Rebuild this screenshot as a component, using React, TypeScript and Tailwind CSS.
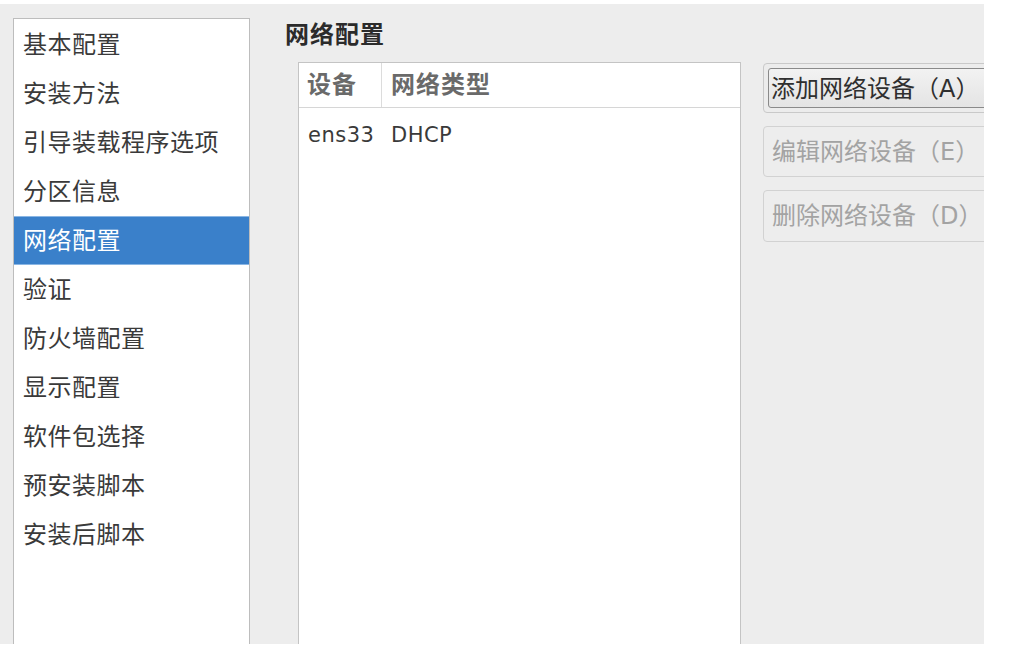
const items = [
  '基本配置',
  '安装方法',
  '引导装载程序选项',
  '分区信息',
  '网络配置',
  '验证',
  '防火墙配置',
  '显示配置',
  '软件包选择',
  '预安装脚本',
  '安装后脚本',
];

const font = { fontFamily: '"DejaVu Sans", "Noto Sans CJK SC", sans-serif' };

export default function App() {
  return (
    <div className="w-[1010px] h-[660px] bg-white overflow-hidden" style={font}>
      <div className="w-[984px] h-[640px] mt-[4px] bg-[#ededed] flex overflow-hidden">
        {/* sidebar */}
        <div className="shrink-0 ml-[13px] mt-[14px] w-[237px] bg-white border border-b-0 border-[#bdbdbd] pt-[1px]">
          {items.map((it, i) => (
            <div
              key={it}
              className={`h-[49px] flex items-center pl-[9px] text-[24px] tracking-[0.5px] ${
                i === 4
                  ? 'bg-[#3a80ca] text-white border-y border-[#8ab6e4]'
                  : 'text-[#3a3a3a]'
              }`}
            >
              {it}
            </div>
          ))}
        </div>

        {/* main */}
        <div className="shrink-0 ml-[35px] flex flex-col">
          <div className="h-[44px] pt-[16px] text-[24px] tracking-[1px] font-bold text-[#2b2b2b] leading-[30px]">网络配置</div>
          <div className="flex flex-1 mt-[14px]">
            <div className="shrink-0 ml-[13px] w-[443px] bg-white border border-b-0 border-[#c4c4c4] flex flex-col">
              <div className="h-[45px] flex border-b border-[#d6d6d6] text-[24px] tracking-[1px] text-[#6a6a6a] font-bold">
                <div className="w-[83px] pl-[8px] flex items-center border-r border-[#dcdcdc]">设备</div>
                <div className="pl-[9px] flex items-center">网络类型</div>
              </div>
              <div className="h-[56px] flex items-center text-[21px] tracking-[0.5px] text-[#3a3a3a]">
                <div className="w-[83px] pl-[9px]">ens33</div>
                <div className="pl-[9px]">DHCP</div>
              </div>
            </div>
            <div className="shrink-0 ml-[22px] w-[250px] flex flex-col mt-[1px]">
              <div className="h-[50px] rounded-[4px] border border-[#c9c9c9] bg-[#ececec] p-[4px]">
                <div className="h-full rounded-[3px] border border-[#8a8a8a] bg-gradient-to-b from-[#f2f2f2] to-[#e4e4e4] flex items-center pl-[2px] pt-[2px] text-[24px] text-[#2f2f2f] whitespace-nowrap">
                  添加网络设备（A）
                </div>
              </div>
              <div className="mt-[13px] h-[51px] rounded-[4px] border border-[#d2d2d2] bg-[#ededed] flex items-center pl-[8px] text-[24px] text-[#a3a3a3] whitespace-nowrap">
                编辑网络设备（E）
              </div>
              <div className="mt-[13px] h-[52px] rounded-[4px] border border-[#d2d2d2] bg-[#ededed] flex items-center pl-[8px] text-[24px] text-[#a3a3a3] whitespace-nowrap">
                删除网络设备（D）
              </div>
            </div>
          </div>
        </div>
      </div>
    </div>
  );
}
